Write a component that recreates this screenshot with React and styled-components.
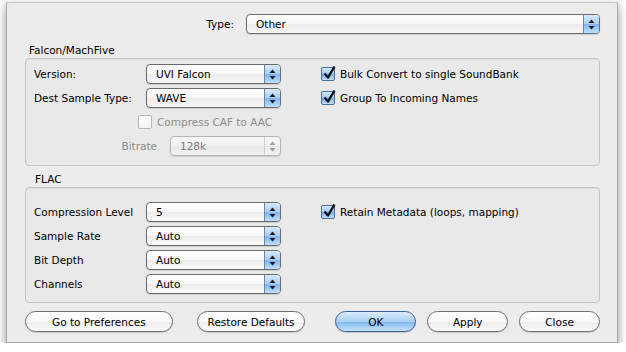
import React from 'react'
import styled, { createGlobalStyle, css } from 'styled-components'

const GlobalStyle = createGlobalStyle`
    html, body {
        margin: 0;
        padding: 0;
        background: #ffffff;
    }
    body {
        font-family: "DejaVu Sans", "Liberation Sans", sans-serif;
        font-size: 10.5px;
        color: #000;
    }
`;

const Window = styled.div`
    box-sizing: border-box;
    margin: 2px 0 0 6px;
    width: 612px;
    height: 341px;
    background: #ececec;
    border: 1px solid #a8a8a8;
    border-top-color: #c8c8c8;
    box-shadow: 0 4px 9px rgba(0, 0, 0, 0.45);
    padding: 11px 17px 0 18px;
    display: flex;
    flex-direction: column;
`;

const TypeRow = styled.div`
    display: flex;
    align-items: center;
    justify-content: flex-end;
    gap: 12px;
`;

const SectionTitle = styled.div`
    height: 15px;
    line-height: 15px;
    margin-top: ${p => p.$top}px;
    padding-left: ${p => p.$indent}px;
`;

const GroupBox = styled.div`
    box-sizing: border-box;
    height: ${p => p.$height}px;
    border: 1px solid #c6c6c6;
    border-radius: 4px;
    background: #e9e9e9;
    box-shadow: inset 0 1px 0 #dcdcdc;
    padding: ${p => p.$padTop}px 8px 0 8px;
    display: flex;
    gap: 40px;
`;

const Column = styled.div`
    display: flex;
    flex-direction: column;
    gap: ${p => p.$gap}px;
`;

const FieldRow = styled.div`
    display: flex;
    align-items: center;
    height: 20px;
    ${p => p.$indent && css`padding-left: ${p.$indent}px;`}
    ${p => p.$end && css`justify-content: flex-end; gap: 13px;`}
`;

const Label = styled.span`
    width: ${p => p.$width || 112}px;
    color: ${p => (p.$disabled ? '#8c8c8c' : '#000')};
    white-space: nowrap;
`;

const PopupBox = styled.div`
    box-sizing: border-box;
    position: relative;
    width: ${p => p.$width}px;
    height: 20px;
    border: 1px solid ${p => (p.$disabled ? '#b4b4b4' : '#6b6b6b')};
    border-radius: 4px;
    background: ${p => (p.$disabled
        ? 'linear-gradient(#f6f6f6, #f1f1f1 50%, #e9e9e9 51%, #f2f2f2)'
        : 'linear-gradient(#ffffff, #f8f8f8 50%, #ececec 51%, #f8f8f8)')};
    box-shadow: 0 1px 1px rgba(0, 0, 0, 0.12);
    display: flex;
    align-items: center;
    padding-left: 9px;
    color: ${p => (p.$disabled ? '#7c7c7c' : '#000')};
    overflow: hidden;
`;

const Stepper = styled.div`
    position: absolute;
    top: 0;
    right: 0;
    bottom: 0;
    width: 15px;
    border-left: 1px solid ${p => (p.$disabled ? '#cfcfcf' : '#6c84a8')};
    background: ${p => (p.$disabled
        ? 'transparent'
        : 'linear-gradient(#d8eafc, #a9cdf3 50%, #7fb4ec 51%, #bfe0ff)')};
    display: flex;
    align-items: center;
    justify-content: center;
`;

const Arrows = ({ color }) => (
    <svg width="7" height="11" viewBox="0 0 7 11">
        <path d="M3.5 0.5 L6.5 4 L0.5 4 Z" fill={color} />
        <path d="M3.5 10.5 L6.5 7 L0.5 7 Z" fill={color} />
    </svg>
);

const Popup = ({ value, width, disabled }) => (
    <PopupBox $width={width} $disabled={disabled}>
        {value}
        <Stepper $disabled={disabled}>
            <Arrows color={disabled ? '#9c9c9c' : '#1c1c1c'} />
        </Stepper>
    </PopupBox>
);

const CheckWrap = styled.label`
    display: flex;
    align-items: center;
    gap: 5px;
    height: 20px;
    color: ${p => (p.$disabled ? '#8c8c8c' : '#000')};
    white-space: nowrap;
`;

const Box = styled.span`
    box-sizing: border-box;
    width: 14px;
    height: 14px;
    border-radius: 2px;
    border: 1px solid ${p => (p.$checked ? '#4f6e9c' : '#b8b8b8')};
    background: ${p => (p.$checked
        ? 'linear-gradient(#d6e9fc, #9fc8f1 50%, #76afea 51%, #bddfff)'
        : 'linear-gradient(#ffffff, #f2f2f2)')};
    position: relative;
    flex: none;
`;

const Tick = styled.svg`
    position: absolute;
    left: 1px;
    top: -3px;
`;

const Checkbox = ({ label, checked, disabled }) => (
    <CheckWrap $disabled={disabled}>
        <Box $checked={checked}>
            {checked && (
                <Tick width="13" height="15" viewBox="0 0 13 15">
                    <path d="M1.5 8.5 L5 12.5 L11.5 1.5" fill="none" stroke="#111" strokeWidth="2.4" strokeLinejoin="round" />
                </Tick>
            )}
        </Box>
        {label}
    </CheckWrap>
);

const ButtonRow = styled.div`
    display: flex;
    margin-top: 8px;
    height: 21px;
`;

const Button = styled.div`
    box-sizing: border-box;
    width: ${p => p.$width}px;
    margin-left: ${p => p.$gap || 0}px;
    height: 21px;
    border-radius: 11px;
    border: 1px solid ${p => (p.$primary ? '#3d5f94' : '#6e6e6e')};
    background: ${p => (p.$primary
        ? 'linear-gradient(#dcecfd, #aacff3 50%, #80b6ed 51%, #c6e4ff)'
        : 'linear-gradient(#ffffff, #f9f9f9 50%, #ededed 51%, #fbfbfb)')};
    box-shadow: 0 1px 1px rgba(0, 0, 0, 0.15);
    display: flex;
    align-items: center;
    justify-content: center;
`;

const App = () => {
    return (
        <>
            <GlobalStyle />
            <Window>
                <TypeRow>
                    <span>Type:</span>
                    <Popup value="Other" width={354} />
                </TypeRow>

                <SectionTitle $top={9} $indent={4}>Falcon/MachFive</SectionTitle>
                <GroupBox $height={108} $padTop={5}>
                    <Column $gap={4}>
                        <FieldRow>
                            <Label>Version:</Label>
                            <Popup value="UVI Falcon" width={135} />
                        </FieldRow>
                        <FieldRow>
                            <Label>Dest Sample Type:</Label>
                            <Popup value="WAVE" width={135} />
                        </FieldRow>
                        <FieldRow $indent={104}>
                            <Checkbox label="Compress CAF to AAC" disabled />
                        </FieldRow>
                        <FieldRow $end>
                            <Label $disabled $width="auto">Bitrate</Label>
                            <Popup value="128k" width={111} disabled />
                        </FieldRow>
                    </Column>
                    <Column $gap={4}>
                        <Checkbox label="Bulk Convert to single SoundBank" checked />
                        <Checkbox label="Group To Incoming Names" checked />
                    </Column>
                </GroupBox>

                <SectionTitle $top={6} $indent={10}>FLAC</SectionTitle>
                <GroupBox $height={116} $padTop={14}>
                    <Column $gap={4}>
                        <FieldRow>
                            <Label>Compression Level</Label>
                            <Popup value="5" width={135} />
                        </FieldRow>
                        <FieldRow>
                            <Label>Sample Rate</Label>
                            <Popup value="Auto" width={135} />
                        </FieldRow>
                        <FieldRow>
                            <Label>Bit Depth</Label>
                            <Popup value="Auto" width={135} />
                        </FieldRow>
                        <FieldRow>
                            <Label>Channels</Label>
                            <Popup value="Auto" width={135} />
                        </FieldRow>
                    </Column>
                    <Column $gap={4}>
                        <Checkbox label="Retain Metadata (loops, mapping)" checked />
                    </Column>
                </GroupBox>

                <ButtonRow>
                    <Button $width={148}>Go to Preferences</Button>
                    <Button $width={109} $gap={24}>Restore Defaults</Button>
                    <Button $width={81} $gap={30} $primary>OK</Button>
                    <Button $width={81} $gap={11}>Apply</Button>
                    <Button $width={81} $gap={11}>Close</Button>
                </ButtonRow>
            </Window>
        </>
    )
}

export default App
